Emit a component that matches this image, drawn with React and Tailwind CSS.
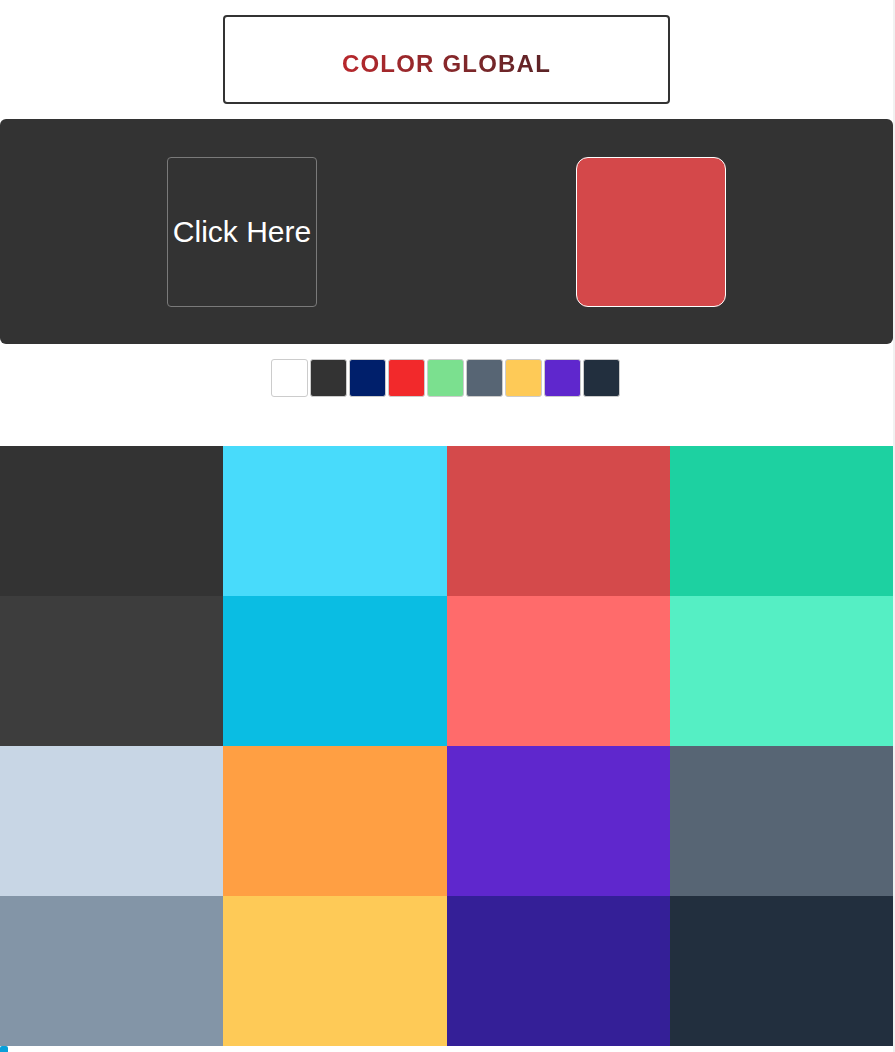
const swatches = [
  "#ffffff",
  "#333333",
  "#001f6b",
  "#f2292b",
  "#7be08f",
  "#576574",
  "#feca57",
  "#5f27cd",
  "#222f3e",
];

const palette = [
  "#333333", "#48dbfb", "#d44a4b", "#1dd1a1",
  "#3d3d3d", "#0abde3", "#ff6b6b", "#55efc4",
  "#c8d6e5", "#ff9f43", "#5f27cd", "#576574",
  "#8395a7", "#feca57", "#341f97", "#222f3e",
];

const App = () => {
  return (
    <div className="flex min-h-[1052px] bg-white font-['Liberation_Sans',Arial,sans-serif]">
      <div className="w-[893px] flex flex-col">
        <div className="flex justify-center pt-[15px]">
          <div className="w-[447px] h-[89px] border-2 border-[#333] rounded-[4px] flex items-center justify-center">
            <h1 className="text-[24px] font-bold tracking-[1.2px] leading-none pt-[8px] bg-gradient-to-r from-[#b8272c] to-[#5a2326] bg-clip-text text-transparent">
              COLOR GLOBAL
            </h1>
          </div>
        </div>

        <div className="mt-[15px] h-[225px] bg-[#333] rounded-[6px] flex items-center justify-between px-[167px]">
          <button className="w-[150px] h-[150px] border border-[#7a7a7a] rounded-[4px] text-white text-[30px] leading-none">
            Click Here
          </button>
          <div className="w-[150px] h-[150px] bg-[#d4484a] border border-white rounded-[12px]" />
        </div>

        <div className="flex justify-center gap-[2px] mt-[15px] pr-[2px]">
          {swatches.map((c) => (
            <div
              key={c}
              className="w-[37px] h-[38px] border border-[#cccccc] rounded-[3px]"
              style={{ backgroundColor: c }}
            />
          ))}
        </div>

        <div className="grid grid-cols-4 mt-[49px]">
          {palette.map((c, i) => (
            <div key={i} className="h-[150px]" style={{ backgroundColor: c }} />
          ))}
        </div>
        <div className="w-[8px] h-[8px] bg-[#0a9fd8] rounded-[2px]" />
      </div>
      <div className="w-[2px] bg-[#f1f1f1]" />
    </div>
  );
};

export default App;
